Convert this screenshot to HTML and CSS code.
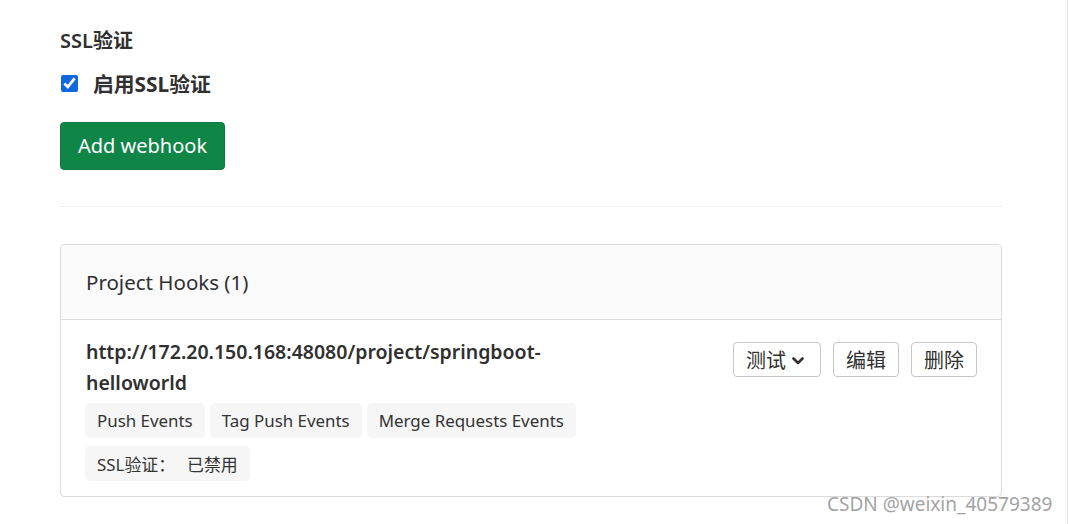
FILE: index.html
```html
<!DOCTYPE html>
<html lang="zh-CN">
<head>
<meta charset="utf-8">
<link rel="stylesheet" href="styles.css">
</head>
<body>
<div class="page">
  <div class="content">
    <div class="section-title">SSL验证</div>
    <label class="check-row">
      <input type="checkbox" checked>
      <span class="check-label">启用SSL验证</span>
    </label>
    <div class="actions">
      <button class="btn-primary">Add webhook</button>
    </div>
    <hr class="divider">
    <div class="card">
      <div class="card-header">Project Hooks (1)</div>
      <div class="card-body">
        <div class="hook">
          <div class="hook-info">
            <div class="hook-url">http://172.20.150.168:48080/project/springboot-helloworld</div>
            <div class="badges">
              <span class="badge">Push Events</span>
              <span class="badge">Tag Push Events</span>
              <span class="badge">Merge Requests Events</span>
              <span class="badge">SSL验证：<span class="badge-value">已禁用</span></span>
            </div>
          </div>
          <div class="hook-actions">
            <button class="btn btn-dropdown">测试<svg class="caret" width="12" height="8" viewBox="0 0 12 8"><path d="M1.5 1.5 L6 6 L10.5 1.5" fill="none" stroke="#333" stroke-width="2.6" stroke-linecap="round" stroke-linejoin="round"/></svg></button>
            <button class="btn">编辑</button>
            <button class="btn">删除</button>
          </div>
        </div>
      </div>
    </div>
  </div>
  <div class="watermark">CSDN @weixin_40579389</div>
</div>
</body>
</html>
```

FILE: styles.css
```css
* { box-sizing: border-box; }
html, body { margin: 0; padding: 0; background: #fff; }
body {
  font-family: "Noto Sans", "Noto Sans CJK SC", sans-serif;
  color: #303030;
  width: 1068px;
  height: 524px;
  overflow: hidden;
}
.page {
  position: relative;
  height: 524px;
  border-right: 1px solid #e6e6e6;
}
.content {
  width: 942px;
  margin-left: 60px;
  padding-top: 27px;
}
.section-title {
  font-size: 20px;
  font-weight: 600;
  line-height: 28px;
  color: #303030;
}
.check-row {
  display: flex;
  align-items: center;
  margin-top: 14px;
  height: 28px;
}
.check-row input {
  width: 17px;
  height: 17px;
  margin: 0 0 0 1px;
  accent-color: #1068e0;
}
.check-label {
  margin-left: 15px;
  font-size: 20.8px;
  font-weight: 700;
  color: #303030;
}
.actions { margin-top: 25px; }
.btn-primary {
  font-family: inherit;
  background: #108548;
  color: #fff;
  border: 1px solid #0e7a42;
  border-radius: 4px;
  height: 48px;
  width: 165px;
  font-size: 20px;
  padding: 0 0 1px;
}
.divider {
  border: 0;
  border-top: 1px solid #ededed;
  margin: 36px 0 0;
}
.card {
  margin-top: 37px;
  border: 1px solid #dcdcdc;
  border-radius: 4px;
  overflow: hidden;
}
.card-header {
  background: #fafafa;
  border-bottom: 1px solid #dcdcdc;
  height: 75px;
  padding-left: 25px;
  display: flex;
  align-items: center;
  font-size: 20.5px;
  color: #303030;
}
.card-body {
  padding: 16px 24px 15px 24px;
}
.hook {
  display: flex;
  justify-content: space-between;
  align-items: flex-start;
}
.hook-info { width: 520px; }
.hook-url {
  width: 470px;
  font-size: 19.5px;
  font-weight: 600;
  line-height: 31px;
  padding-left: 1px;
  color: #303030;
}
.badges {
  display: flex;
  flex-wrap: wrap;
  gap: 8px 5px;
  margin-top: 5px;
}
.badge {
  background: #f6f6f6;
  border-radius: 5px;
  height: 35px;
  padding: 0 12px;
  display: flex;
  align-items: center;
  font-size: 16.9px;
  color: #333;
}
.badge-value { margin-left: 12px; }
.hook-actions {
  display: flex;
  gap: 12px;
  margin-top: 6px;
}
.btn {
  font-family: inherit;
  background: #fff;
  border: 1px solid #c6c6c6;
  border-radius: 4px;
  height: 35px;
  padding: 0 12px;
  font-size: 20px;
  color: #303030;
  display: flex;
  align-items: center;
}
.btn-dropdown { padding-right: 16px; }
.caret { margin-left: 6px; margin-top: 2px; }
.watermark {
  position: absolute;
  left: 827px;
  top: 491px;
  font-size: 19px;
  color: #9a9a9a;
  opacity: 0.9;
}
```
